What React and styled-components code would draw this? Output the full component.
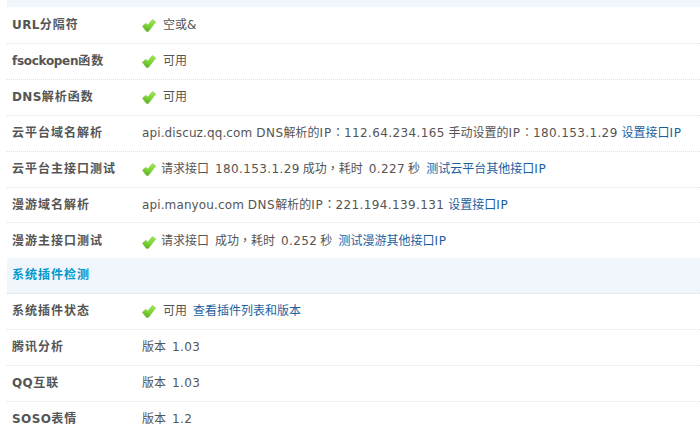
import React from 'react';
import styled, { createGlobalStyle } from 'styled-components';

const GlobalStyle = createGlobalStyle`
  html, body {
    margin: 0;
    padding: 0;
    background: #fff;
    overflow: hidden;
  }
  body {
    font: 12px "DejaVu Sans", "Noto Sans CJK SC", sans-serif;
    color: #555;
  }
`;

function Check() {
  return (
    <CheckIcon viewBox="0 0 14 13" width="14" height="13">
      <defs>
        <linearGradient id="checkFill" x1="0.7" y1="0" x2="0.3" y2="1">
          <stop offset="0" stopColor="#9ae84a" />
          <stop offset="0.6" stopColor="#7ad232" />
          <stop offset="1" stopColor="#58ab26" />
        </linearGradient>
      </defs>
      <path d="M0.3 7.2 L3.8 4.2 L5.8 6 L10.4 0.4 L13.8 3 L6.4 12.6 L4.4 12.6 Z" fill="url(#checkFill)" stroke="#74b548" strokeWidth="0.4" strokeLinejoin="round" />
    </CheckIcon>
  );
}

// digits, host names and full width punctuation each get their own spacing,
// the original font is wider on these than DejaVu
function valueText(str) {
  return str.split(/(\d[\d.]*|[：，]|api\.[a-z.]+|DNS|IP)/).map((part, i) => {
    if (/^\d/.test(part)) return <Num key={i}>{part}</Num>;
    if (/^[：，]$/.test(part)) return <Punct key={i}>{part}</Punct>;
    if (part.startsWith('api.')) return <Host key={i}>{part}</Host>;
    if (part === 'DNS') return <Abbr key={i}>{part}</Abbr>;
    if (part === 'IP') return <Abbr key={i} $ip>{part}</Abbr>;
    return part;
  });
}

function labelText(str) {
  return str.split(/([A-Za-z]+)/).map((part, i) => {
    if (/^[A-Z]+$/.test(part)) return <Caps key={i}>{part}</Caps>;
    if (/^[a-z]+$/.test(part)) return <Lower key={i}>{part}</Lower>;
    return part ? <BoldCjk key={i}>{part}</BoldCjk> : null;
  });
}

const rows = [
  { label: 'URL分隔符', check: true, text: '空或&' },
  { label: 'fsockopen函数', check: true, text: '可用' },
  { label: 'DNS解析函数', check: true, text: '可用' },
  {
    label: '云平台域名解析',
    wide: true,
    text: 'api.discuz.qq.com DNS解析的IP：112.64.234.165 手动设置的IP：180.153.1.29 ',
    link: '设置接口IP',
  },
  {
    label: '云平台主接口测试',
    check: true,
    tight: true,
    text: '请求接口  180.153.1.29 成功，耗时  0.227 秒  ',
    link: '测试云平台其他接口IP',
  },
  {
    label: '漫游域名解析',
    short: true,
    wide: true,
    text: 'api.manyou.com DNS解析的IP：221.194.139.131 ',
    link: '设置接口IP',
  },
  {
    label: '漫游主接口测试',
    check: true,
    tight: true,
    short: true,
    flat: true,
    text: '请求接口  成功，耗时  0.252 秒  ',
    link: '测试漫游其他接口IP',
  },
];

const pluginRows = [
  { label: '系统插件状态', check: true, text: '可用  ', link: '查看插件列表和版本' },
  { label: '腾讯分析', text: '版本  1.03' },
  { label: 'QQ互联', text: '版本  1.03' },
  { label: 'SOSO表情', text: '版本  1.2', flat: true },
];

function Row({ row }) {
  return (
    <RowWrap $short={row.short} $flat={row.flat}>
      <Label>{labelText(row.label)}</Label>
      <Value>
        {row.check && <Check />}
        <Text $tight={row.tight} $plain={!row.check} $wide={row.wide}>
          {valueText(row.text)}
          {row.link && <Link>{valueText(row.link)}</Link>}
        </Text>
      </Value>
    </RowWrap>
  );
}

export default function App() {
  return (
    <Page>
      <GlobalStyle />
      <TopBand />
      {rows.map((r) => <Row key={r.label} row={r} />)}
      <SectionHeader><BoldCjk>系统插件检测</BoldCjk></SectionHeader>
      {pluginRows.map((r) => <Row key={r.label} row={r} />)}
    </Page>
  );
}

const Page = styled.div`
  width: 700px;
  height: 443px;
  padding-left: 7px;
  box-sizing: border-box;
  overflow: hidden;
`;

const TopBand = styled.div`
  height: 7px;
  margin-bottom: 1px;
  background: #f0f6fc;
`;

const RowWrap = styled.div`
  display: flex;
  align-items: center;
  height: ${(p) => (p.$short ? '35px' : '36px')};
  padding-bottom: ${(p) => (p.$short ? (p.$flat ? '1px' : '3px') : '5px')};
  box-sizing: border-box;
  border-bottom: 1px dotted ${(p) => (p.$flat ? 'transparent' : '#d5e3ef')};
  white-space: pre;
`;

const Label = styled.div`
  width: 135px;
  flex: none;
  padding-left: 5px;
  box-sizing: border-box;
  font-weight: bold;
  color: #555;
`;

const BoldCjk = styled.span`
  letter-spacing: 1px;
`;

const Caps = styled.span`
  letter-spacing: 0.4px;
`;

const Lower = styled.span`
  letter-spacing: -0.3px;
`;

const Value = styled.div`
  display: flex;
  align-items: center;
`;

const CheckIcon = styled.svg`
  flex: none;
  margin-top: 5px;
`;

const Text = styled.span`
  margin-left: ${(p) => (p.$plain ? '0' : p.$tight ? '5px' : '7px')};
  word-spacing: ${(p) => (p.$wide ? '0' : '-0.8px')};
`;

const Num = styled.span`
  letter-spacing: 0.38px;
`;

const Host = styled.span`
  letter-spacing: 0.12px;
`;

const Abbr = styled.span`
  letter-spacing: ${(p) => (p.$ip ? '0.8px' : '0.5px')};
`;

const Punct = styled.span`
  font-family: "Noto Sans CJK TC", sans-serif;
`;

const Link = styled.a`
  color: #1c5f9e;
`;

const SectionHeader = styled.div`
  height: 36px;
  padding: 0 0 5px 5px;
  display: flex;
  align-items: center;
  box-sizing: border-box;
  background: #f0f6fc;
  border-bottom: 1px dotted #d5e3ef;
  color: #09c;
  font-weight: bold;
`;
